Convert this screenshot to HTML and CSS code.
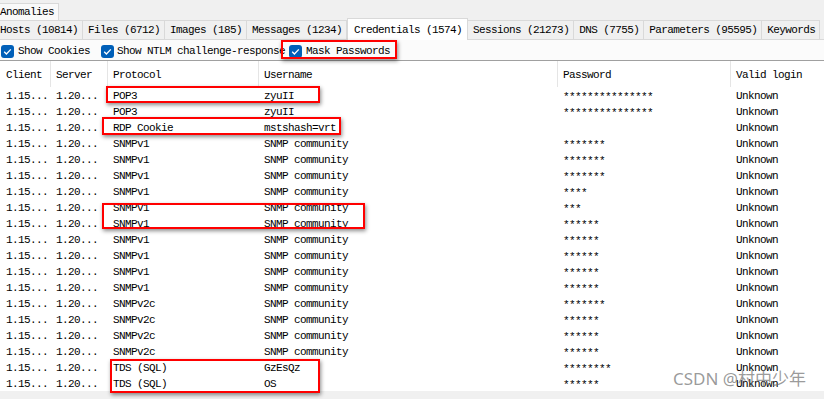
FILE: index.html
```html
<!DOCTYPE html>
<html lang="en">
<head>
    <meta charset="UTF-8">
    <title>Credentials</title>
    <link rel="stylesheet" href="styles.css">
</head>
<body>
    <div class="tabs tabs-top">
        <div class="tab">Anomalies</div>
    </div>
    <div class="tabs tabs-main">
        <div class="tab">Hosts (10814)</div>
        <div class="tab">Files (6712)</div>
        <div class="tab">Images (185)</div>
        <div class="tab">Messages (1234)</div>
        <div class="tab active">Credentials (1574)</div>
        <div class="tab">Sessions (21273)</div>
        <div class="tab">DNS (7755)</div>
        <div class="tab">Parameters (95595)</div>
        <div class="tab">Keywords</div>
    </div>

    <div class="options">
        <label class="opt opt-cookies"><span class="check"><svg viewBox="0 0 13 13"><path d="M3.2 6.8 L5.4 9 L9.8 4.4"/></svg></span>Show Cookies</label>
        <label class="opt opt-ntlm"><span class="check"><svg viewBox="0 0 13 13"><path d="M3.2 6.8 L5.4 9 L9.8 4.4"/></svg></span>Show NTLM challenge-response</label>
        <label class="opt"><span class="check"><svg viewBox="0 0 13 13"><path d="M3.2 6.8 L5.4 9 L9.8 4.4"/></svg></span>Mask Passwords</label>
    </div>

    <div class="grid">
        <div class="row head">
            <div>Client</div><div>Server</div><div>Protocol</div><div>Username</div><div>Password</div><div>Valid login</div>
        </div>
        <div class="row"><div>1.15...</div><div>1.20...</div><div>POP3</div><div>zyuII</div><div class="pw">***************</div><div>Unknown</div></div>
        <div class="row"><div>1.15...</div><div>1.20...</div><div>POP3</div><div>zyuII</div><div class="pw">***************</div><div>Unknown</div></div>
        <div class="row"><div>1.15...</div><div>1.20...</div><div>RDP Cookie</div><div>mstshash=vrt</div><div class="pw"></div><div>Unknown</div></div>
        <div class="row"><div>1.15...</div><div>1.20...</div><div>SNMPv1</div><div>SNMP community</div><div class="pw">*******</div><div>Unknown</div></div>
        <div class="row"><div>1.15...</div><div>1.20...</div><div>SNMPv1</div><div>SNMP community</div><div class="pw">*******</div><div>Unknown</div></div>
        <div class="row"><div>1.15...</div><div>1.20...</div><div>SNMPv1</div><div>SNMP community</div><div class="pw">*******</div><div>Unknown</div></div>
        <div class="row"><div>1.15...</div><div>1.20...</div><div>SNMPv1</div><div>SNMP community</div><div class="pw">****</div><div>Unknown</div></div>
        <div class="row"><div>1.15...</div><div>1.20...</div><div>SNMPv1</div><div>SNMP community</div><div class="pw">***</div><div>Unknown</div></div>
        <div class="row"><div>1.15...</div><div>1.20...</div><div>SNMPv1</div><div>SNMP community</div><div class="pw">******</div><div>Unknown</div></div>
        <div class="row"><div>1.15...</div><div>1.20...</div><div>SNMPv1</div><div>SNMP community</div><div class="pw">******</div><div>Unknown</div></div>
        <div class="row"><div>1.15...</div><div>1.20...</div><div>SNMPv1</div><div>SNMP community</div><div class="pw">******</div><div>Unknown</div></div>
        <div class="row"><div>1.15...</div><div>1.20...</div><div>SNMPv1</div><div>SNMP community</div><div class="pw">******</div><div>Unknown</div></div>
        <div class="row"><div>1.15...</div><div>1.20...</div><div>SNMPv1</div><div>SNMP community</div><div class="pw">******</div><div>Unknown</div></div>
        <div class="row"><div>1.15...</div><div>1.20...</div><div>SNMPv2c</div><div>SNMP community</div><div class="pw">*******</div><div>Unknown</div></div>
        <div class="row"><div>1.15...</div><div>1.20...</div><div>SNMPv2c</div><div>SNMP community</div><div class="pw">******</div><div>Unknown</div></div>
        <div class="row"><div>1.15...</div><div>1.20...</div><div>SNMPv2c</div><div>SNMP community</div><div class="pw">******</div><div>Unknown</div></div>
        <div class="row"><div>1.15...</div><div>1.20...</div><div>SNMPv2c</div><div>SNMP community</div><div class="pw">******</div><div>Unknown</div></div>
        <div class="row"><div>1.15...</div><div>1.20...</div><div>TDS (SQL)</div><div>GzEsQz</div><div class="pw">********</div><div>Unknown</div></div>
        <div class="row"><div>1.15...</div><div>1.20...</div><div>TDS (SQL)</div><div>OS</div><div class="pw">******</div><div>Unknown</div></div>
    </div>
    <div class="hscroll"></div>

    <!-- red annotation boxes -->
    <div class="mark mark-mask"></div>
    <div class="mark mark-pop"></div>
    <div class="mark mark-rdp"></div>
    <div class="mark mark-snmp"></div>
    <div class="mark mark-tds"></div>

    <div class="watermark">CSDN @村中少年</div>
</body>
</html>
```

FILE: styles.css
```css
* {
    margin: 0;
    padding: 0;
    box-sizing: border-box;
}

body {
    position: relative;
    width: 824px;
    height: 399px;
    overflow: hidden;
    background: #f0f0f0;
    color: #000;
    font-family: "Liberation Mono", monospace;
    font-size: 11px;
    line-height: 16px;
    letter-spacing: -0.6px;
}

/* tab strip */
.tabs {
    display: flex;
    align-items: flex-end;
    height: 20px;
    white-space: nowrap;
}

.tab {
    padding: 0 4px 0 5px;
    border-top: 1px solid #d9d9d9;
    border-right: 1px solid #d9d9d9;
    background: #f0f0f0;
}

.tab:first-child {
    margin-left: -5px;
}

.tabs-top .tab {
    height: 17px;
    line-height: 16px;
    background: #f9f9f9;
}

.tabs-main {
    border-bottom: 1px solid #d9d9d9;
}

.tabs-main .tab {
    height: 19px;
    line-height: 18px;
}

.tabs-main .tab.active {
    height: 22px;
    margin-bottom: -1px;
    padding: 2px 5px 0 6px;
    border-left: 1px solid #d9d9d9;
    background: #fff;
}

/* options */
.options {
    display: flex;
    align-items: center;
    height: 21px;
    padding: 2px 0 0 1px;
    background: #fbfbfb;
    border-bottom: 1px solid #a0a0a0;
    white-space: nowrap;
}

.opt {
    display: flex;
    align-items: center;
    gap: 4px;
}

.opt-cookies {
    width: 100px;
}

.opt-ntlm {
    width: 188px;
    gap: 3px;
}

.check {
    display: block;
    width: 13px;
    height: 13px;
    border-radius: 3px;
    background: #005fb8;
}

.check svg {
    display: block;
    width: 13px;
    height: 13px;
    fill: none;
    stroke: #fff;
    stroke-width: 1.3;
}

/* data grid */
.grid {
    background: #fff;
}

.row {
    display: grid;
    grid-template-columns: 51px 57px 151px 299px 173px 1fr;
    height: 16px;
    line-height: 18px;
}

.row > div {
    padding-left: 5px;
    white-space: nowrap;
    overflow: hidden;
}

.row > div:first-child {
    padding-left: 6px;
}

.row.head {
    height: 26px;
}

.row.head > div {
    line-height: 29px;
    border-right: 1px solid #e5e5e5;
}

.row.head > div:last-child {
    border-right: none;
}

.pw {
    padding-top: 1px;
}

.hscroll {
    height: 8px;
    background: #f0f0f0;
}

/* annotations */
.mark {
    position: absolute;
    border: 2px solid #f00;
    box-shadow: 1px 2px 4px rgba(0, 0, 0, 0.45);
}

.mark-mask { left: 281px; top: 40px; width: 116px; height: 19px; }
.mark-pop  { left: 106px; top: 86px; width: 214px; height: 17px; }
.mark-rdp  { left: 102px; top: 117px; width: 239px; height: 18px; }
.mark-snmp { left: 102px; top: 203px; width: 263px; height: 26px; }
.mark-tds  { left: 110px; top: 359px; width: 210px; height: 34px; }

.watermark {
    position: absolute;
    left: 673px;
    top: 369px;
    font-family: "Noto Sans", "Noto Sans CJK SC", sans-serif;
    font-size: 17px;
    line-height: 20px;
    letter-spacing: 0;
    color: rgba(110, 110, 110, 0.7);
    white-space: nowrap;
}
```
